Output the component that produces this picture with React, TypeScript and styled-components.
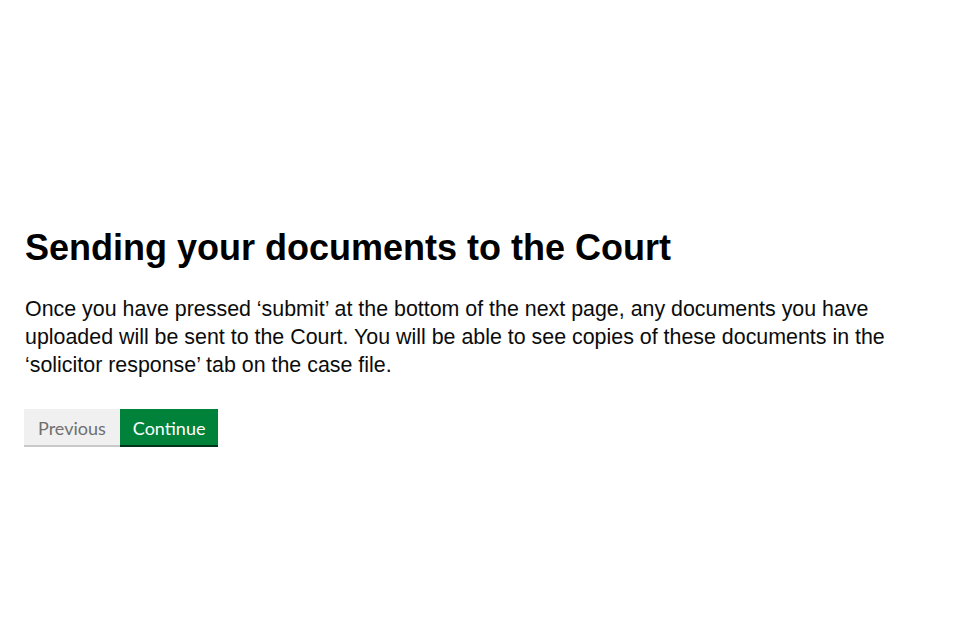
import React from "react";
import styled, { createGlobalStyle } from "styled-components";

const Global = createGlobalStyle`
  html, body { margin: 0; padding: 0; background: #ffffff; }
  body { font-family: "Liberation Sans", Arial, sans-serif; color: #0b0c0c; }
`;

const Page = styled.main`
  width: 960px;
  height: 640px;
  box-sizing: border-box;
  padding: 228px 24px 0 25px;
`;

const Heading = styled.h1`
  margin: 0 0 27px;
  font-family: "Liberation Sans", Arial, sans-serif;
  font-weight: 700;
  font-size: 36px;
  line-height: 40px;
  color: #000;
`;

const Body = styled.p`
  margin: 0 0 30px;
  font-size: 21.4px;
  line-height: 28px;
  color: #0b0c0c;
  max-width: 880px;
`;

const Actions = styled.div`
  display: flex;
  margin-left: -1px;
`;

const Button = styled.button<{ $primary?: boolean }>`
  font-family: Lato, "Open Sans", sans-serif;
  font-size: 18px;
  height: 38px;
  padding: 2px ${(p) => (p.$primary ? "13px" : "14px")} 0;
  border: 0;
  border-bottom: 2px solid ${(p) => (p.$primary ? "#003418" : "#c9c9c9")};
  background: ${(p) => (p.$primary ? "#00823b" : "#f0f0f0")};
  color: ${(p) => (p.$primary ? "#ffffff" : "#6f6f6f")};
  cursor: pointer;
`;

export default function App() {
  return (
    <>
      <Global />
      <Page>
        <Heading>Sending your documents to the Court</Heading>
        <Body>
          Once you have pressed ‘submit’ at the bottom of the next page, any documents you have
          uploaded will be sent to the Court. You will be able to see copies of these documents in the
          ‘solicitor response’ tab on the case file.
        </Body>
        <Actions>
          <Button>Previous</Button>
          <Button $primary>Continue</Button>
        </Actions>
      </Page>
    </>
  );
}
